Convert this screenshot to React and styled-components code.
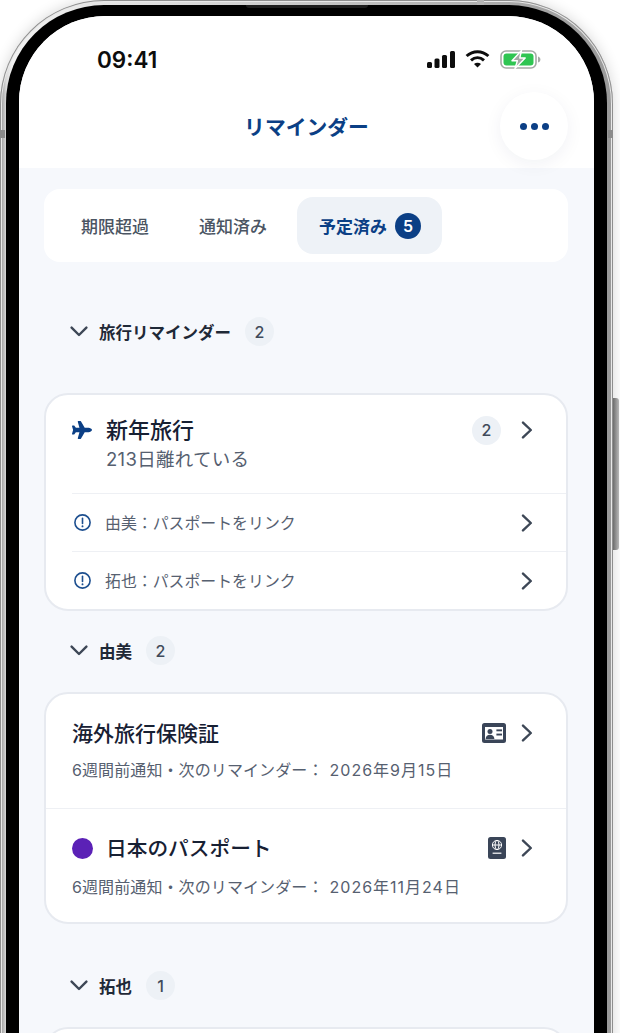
import React from 'react';
import styled, { createGlobalStyle } from 'styled-components';
import { FaPlane } from 'react-icons/fa';

const GlobalStyle = createGlobalStyle`
  html, body {
    margin: 0;
    padding: 0;
    background: #fff;
    overflow: hidden;
  }
  body {
    font-family: Inter, "Noto Sans CJK JP", "Noto Sans", sans-serif;
  }
`;

const Page = styled.div`
  width: 620px;
  height: 1033px;
  overflow: hidden;
  background: #fff;
`;

const Shell = styled.div`
  position: relative;
  box-sizing: border-box;
  width: 613px;
  height: 1240px;
  padding: 5px 6px 0;
  border-radius: 104px;
  background: linear-gradient(90deg, #8d8d8d 0, #d9d9d9 1%, #f2f2f2 2%, #9a9a9a 100%);
  box-shadow: 0 0 14px rgba(0, 0, 0, 0.16), inset 0 0 0 1px #8f8f8f, inset 0 0 0 2px #e8e8e8;
`;

const SideButton = styled.div`
  position: absolute;
  top: 398px;
  right: -6px;
  width: 6px;
  height: 152px;
  border-radius: 0 3px 3px 0;
  background: linear-gradient(90deg, #6d6d6d, #b8b8b8);
`;

const AntennaBand = styled.div`
  position: absolute;
  top: 130px;
  width: 5px;
  height: 8px;
  background: #8a8a8a;
  ${(p) => (p.$side === 'left' ? 'left: 0;' : 'right: 0;')}
`;

const TopBand = styled.div`
  position: absolute;
  top: 0;
  left: 477px;
  width: 7px;
  height: 5px;
  background: #b5b5b5;
`;

const Bezel = styled.div`
  position: relative;
  box-sizing: border-box;
  height: 100%;
  padding: 11px 13px 0;
  border-radius: 98px;
  background: #000;
`;

const Speaker = styled.div`
  position: absolute;
  top: 0;
  left: 240px;
  width: 122px;
  height: 3px;
  border-radius: 0 0 4px 4px;
  background: #1c1c1c;
`;

const Screen = styled.div`
  height: 100%;
  overflow: hidden;
  border-radius: 86px;
  background: #f6f8fc;
`;

const TopArea = styled.div`
  background: #fff;
`;

const StatusBar = styled.div`
  box-sizing: border-box;
  height: 76px;
  padding: 10px 53px 0 78px;
  display: flex;
  align-items: center;
  justify-content: space-between;
`;

const Time = styled.span`
  font-size: 22.5px;
  font-weight: 600;
  color: #0d0d0d;
`;

const StatusIcons = styled.div`
  display: flex;
  align-items: center;
  gap: 10px;
`;

const Header = styled.div`
  box-sizing: border-box;
  height: 76px;
  padding: 0 26px;
  display: grid;
  grid-template-columns: 1fr auto 1fr;
  align-items: center;
`;

const Title = styled.h1`
  grid-column: 2;
  margin: 0 0 8px;
  font-size: 20.8px;
  font-weight: 600;
  color: #0b3f85;
`;

const MenuButton = styled.div`
  grid-column: 3;
  justify-self: end;
  width: 68px;
  height: 68px;
  margin-bottom: 8px;
  border-radius: 50%;
  background: #fff;
  box-shadow: 0 4px 18px rgba(20, 40, 80, 0.06);
  display: flex;
  align-items: center;
  justify-content: center;
  gap: 4px;
`;

const MenuDot = styled.i`
  width: 7px;
  height: 7px;
  border-radius: 50%;
  background: #0b3f85;
`;

const Content = styled.div`
  padding: 21px 26px 0 25px;
`;

const TabBar = styled.div`
  box-sizing: border-box;
  height: 73px;
  padding: 8px 15px;
  display: flex;
  gap: 6px;
  border-radius: 16px;
  background: #fff;
`;

const Tab = styled.div`
  padding: 0 ${(p) => (p.$active ? 21 : 22)}px 0 22px;
  margin-left: ${(p) => (p.$active ? 2 : 0)}px;
  display: flex;
  align-items: center;
  gap: 8px;
  border-radius: 16px;
  font-size: 17px;
  font-weight: ${(p) => (p.$active ? 600 : 500)};
  color: ${(p) => (p.$active ? '#0b3f85' : '#4b5563')};
  background: ${(p) => (p.$active ? '#eef2f7' : 'transparent')};
`;

const TabCount = styled.span`
  width: 26px;
  height: 26px;
  border-radius: 50%;
  background: #0b3f85;
  color: #fff;
  font-size: 16px;
  font-weight: 600;
  display: flex;
  align-items: center;
  justify-content: center;
`;

const SectionHead = styled.div`
  height: 29px;
  margin: ${(p) => p.$top}px 0 ${(p) => p.$bottom}px 26px;
  display: flex;
  align-items: center;
`;

const SectionLabel = styled.span`
  margin: 0 14px 0 11px;
  font-size: 16.5px;
  font-weight: 600;
  color: #1f2937;
`;

const Count = styled.span`
  width: 29px;
  height: 29px;
  border-radius: 50%;
  background: #edf1f6;
  color: #3f4a5a;
  font-size: 16px;
  font-weight: 500;
  display: flex;
  align-items: center;
  justify-content: center;
`;

const Card = styled.div`
  box-sizing: border-box;
  border: 2px solid #e7eaf0;
  border-radius: 24px;
  background: #fff;
`;

const TripRow = styled.div`
  box-sizing: border-box;
  height: 98px;
  padding: 19px 33px 0 26px;
`;

const TripHead = styled.div`
  display: flex;
  align-items: center;
  height: 32px;
`;

const TripName = styled.span`
  flex: 1;
  margin-left: 14px;
  padding-bottom: 4px;
  font-size: 22px;
  font-weight: 500;
  color: #172033;
`;

const TripSub = styled.div`
  margin-left: 34px;
  font-size: 18.5px;
  line-height: 26px;
  letter-spacing: 0.3px;
  color: #566070;
`;

const LinkRow = styled.div`
  box-sizing: border-box;
  height: 58px;
  margin-left: 26px;
  padding-right: 33px;
  display: flex;
  align-items: center;
  border-top: 1px solid #eef0f4;
`;

const LinkText = styled.span`
  flex: 1;
  margin-left: 14px;
  font-size: 15.9px;
  color: #566070;
`;

const DocRow = styled.div`
  box-sizing: border-box;
  height: 114px;
  padding: 24px 33px 0 26px;
  border-top: ${(p) => (p.$divided ? '1px solid #eef0f4' : 'none')};
`;

const DocHead = styled.div`
  height: 30px;
  display: flex;
  align-items: center;
`;

const DocName = styled.span`
  flex: 1;
  padding-bottom: 2px;
  font-size: ${(p) => p.$size}px;
  font-weight: 500;
  color: #172033;
`;

const ColorDot = styled.i`
  width: 21px;
  height: 21px;
  margin-right: 13px;
  border-radius: 50%;
  background: #5b21b6;
`;

const DocIcon = styled.svg`
  margin-right: 15px;
  fill: #3a4558;
`;

const DocSub = styled.div`
  margin-top: ${(p) => p.$gap}px;
  font-size: 16px;
  line-height: 24px;
  letter-spacing: 0.1px;
  color: #566070;
`;

const DateText = styled.span`
  margin-left: 6px;
  letter-spacing: 1px;
`;

const CountGap = styled.span`
  width: 20px;
`;

const CutCard = styled(Card)`
  height: 60px;
`;

const ChevronRight = () => (
  <svg width="12" height="18" viewBox="0 0 12 18" fill="none" stroke="#3d4756" strokeWidth="2.4" strokeLinecap="round" strokeLinejoin="round">
    <path d="M2 1.6 L9.8 9 L2 16.4" />
  </svg>
);

const ChevronDown = () => (
  <svg width="18" height="11" viewBox="0 0 18 11" fill="none" stroke="#3d4756" strokeWidth="2.4" strokeLinecap="round" strokeLinejoin="round">
    <path d="M1.6 1.6 L9 9 L16.4 1.6" />
  </svg>
);

const AlertIcon = () => (
  <svg width="17" height="17" viewBox="0 0 17 17" fill="none" stroke="#1d4f8f" strokeWidth="1.6" strokeLinecap="round" style={{ marginLeft: 2 }}>
    <circle cx="8.5" cy="8.5" r="7.6" />
    <path d="M8.5 4.4 V9.4" />
    <path d="M8.5 12.2 V12.4" strokeWidth="1.9" />
  </svg>
);

const SignalIcon = () => (
  <svg width="28" height="17" viewBox="0 0 28 17" fill="#0d0d0d">
    <rect x="0" y="11" width="5" height="6" rx="1.5" />
    <rect x="7.5" y="7.5" width="5" height="9.5" rx="1.5" />
    <rect x="15" y="4" width="5" height="13" rx="1.5" />
    <rect x="23" y="0" width="5" height="17" rx="1.5" />
  </svg>
);

const WifiIcon = () => (
  <svg width="25" height="18" viewBox="0 0 25 18" fill="none" stroke="#0d0d0d" strokeWidth="3">
    <path d="M1.6 6 C8 0.2 17 0.2 23.4 6" />
    <path d="M6 10.4 C10 6.8 15 6.8 19 10.4" />
    <path d="M9 14 L12.5 17.4 L16 14 C14 12.2 11 12.2 9 14 Z" fill="#0d0d0d" stroke="none" />
  </svg>
);

const BatteryIcon = () => (
  <svg width="41" height="19" viewBox="0 0 41 19" fill="none">
    <rect x="1" y="1" width="35" height="17" rx="5" stroke="#a5aaa6" strokeWidth="1.6" />
    <rect x="3.5" y="3.5" width="30" height="12" rx="3" fill="#2fc552" />
    <path d="M38 6.5 C39.6 7 40.4 8 40.4 9.5 C40.4 11 39.6 12 38 12.5 Z" fill="#a5aaa6" />
    <path d="M21.5 0.5 L12 10.8 H17.4 L15 18.5 L25.2 8 H19.8 Z" fill="#a3a8a5" stroke="#fff" strokeWidth="1.4" strokeLinejoin="round" />
  </svg>
);

const IdCardIcon = () => (
  <DocIcon width="24" height="20" viewBox="0 0 24 20">
    <path fillRule="evenodd" d="M2.5 0 H21.5 A2.5 2.5 0 0 1 24 2.5 V17.5 A2.5 2.5 0 0 1 21.5 20 H2.5 A2.5 2.5 0 0 1 0 17.5 V2.5 A2.5 2.5 0 0 1 2.5 0 Z M3 4 V16.5 H21 V4 Z" />
    <circle cx="8" cy="8.4" r="2.5" />
    <path d="M3.6 16 C3.8 13 5.6 11.8 8 11.8 C10.4 11.8 12.2 13 12.4 16 Z" />
    <rect x="14.4" y="6.4" width="5.6" height="1.9" />
    <rect x="14.4" y="10.6" width="5.6" height="1.9" />
  </DocIcon>
);

const PassportIcon = () => (
  <DocIcon width="18" height="22" viewBox="0 0 18 22">
    <rect x="0" y="0" width="18" height="22" rx="2.5" />
    <g fill="none" stroke="#fff" strokeWidth="1">
      <circle cx="9" cy="8" r="4.6" />
      <ellipse cx="9" cy="8" rx="2" ry="4.6" />
      <path d="M4.4 8 H13.6" />
    </g>
    <rect x="4.6" y="15.6" width="8.8" height="1.2" fill="#fff" />
  </DocIcon>
);

function App() {
  return (
    <Page>
      <GlobalStyle />
      <Shell>
        <TopBand />
        <AntennaBand $side="left" />
        <AntennaBand $side="right" />
        <SideButton />
        <Bezel>
          <Speaker />
          <Screen>
            <TopArea>
              <StatusBar>
                <Time>09:41</Time>
                <StatusIcons>
                  <SignalIcon />
                  <WifiIcon />
                  <BatteryIcon />
                </StatusIcons>
              </StatusBar>
              <Header>
                <Title>リマインダー</Title>
                <MenuButton>
                  <MenuDot />
                  <MenuDot />
                  <MenuDot />
                </MenuButton>
              </Header>
            </TopArea>

            <Content>
              <TabBar>
                <Tab>期限超過</Tab>
                <Tab>通知済み</Tab>
                <Tab $active>
                  予定済み
                  <TabCount>5</TabCount>
                </Tab>
              </TabBar>

              <SectionHead $top={55} $bottom={47}>
                <ChevronDown />
                <SectionLabel>旅行リマインダー</SectionLabel>
                <Count>2</Count>
              </SectionHead>

              <Card>
                <TripRow>
                  <TripHead>
                    <FaPlane size={20} color="#0b3f85" />
                    <TripName>新年旅行</TripName>
                    <Count>2</Count>
                    <CountGap />
                    <ChevronRight />
                  </TripHead>
                  <TripSub>213日離れている</TripSub>
                </TripRow>
                <LinkRow>
                  <AlertIcon />
                  <LinkText>由美：パスポートをリンク</LinkText>
                  <ChevronRight />
                </LinkRow>
                <LinkRow>
                  <AlertIcon />
                  <LinkText>拓也：パスポートをリンク</LinkText>
                  <ChevronRight />
                </LinkRow>
              </Card>

              <SectionHead $top={25} $bottom={27}>
                <ChevronDown />
                <SectionLabel>由美</SectionLabel>
                <Count>2</Count>
              </SectionHead>

              <Card>
                <DocRow>
                  <DocHead>
                    <DocName $size={21}>海外旅行保険証</DocName>
                    <IdCardIcon />
                    <ChevronRight />
                  </DocHead>
                  <DocSub $gap={10}>
                    6週間前通知・次のリマインダー：<DateText>2026年9月15日</DateText>
                  </DocSub>
                </DocRow>
                <DocRow $divided>
                  <DocHead>
                    <ColorDot />
                    <DocName $size={20.7}>日本のパスポート</DocName>
                    <PassportIcon />
                    <ChevronRight />
                  </DocHead>
                  <DocSub $gap={12}>
                    6週間前通知・次のリマインダー：<DateText>2026年11月24日</DateText>
                  </DocSub>
                </DocRow>
              </Card>

              <SectionHead $top={47} $bottom={27}>
                <ChevronDown />
                <SectionLabel>拓也</SectionLabel>
                <Count>1</Count>
              </SectionHead>

              <CutCard />
            </Content>
          </Screen>
        </Bezel>
      </Shell>
    </Page>
  );
}

export default App;
